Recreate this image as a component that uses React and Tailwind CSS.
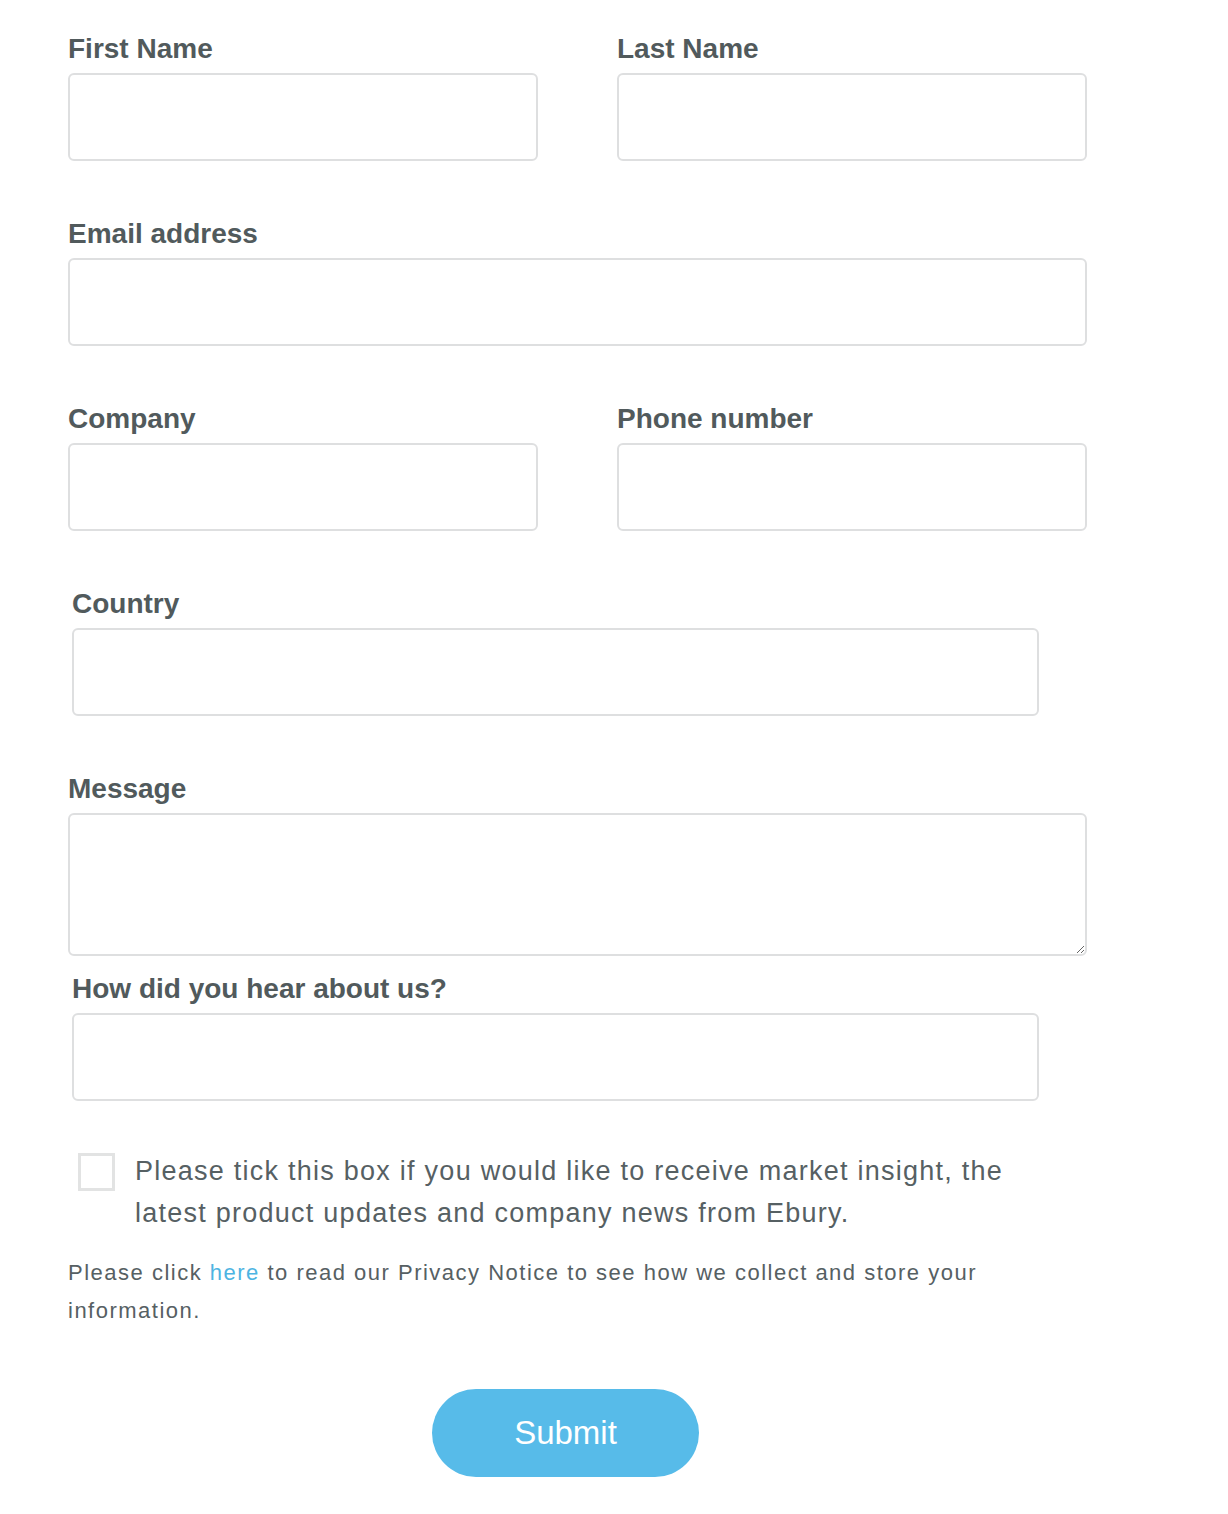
import { useState } from "react";

const labelCls = "block h-9 leading-9 text-[28px] font-semibold text-[#515a5c] mb-1.5";
const inputCls = "block w-full h-[88px] rounded-md border-2 border-[#dedfe0] bg-white px-4 text-[22px] text-[#515a5c] outline-none";

function Field({ label, type = "text", className = "" }) {
    return (
        <div className={className}>
            <label className={labelCls}>{label}</label>
            <input type={type} className={inputCls} />
        </div>
    );
}

export default function App() {
    const [optIn, setOptIn] = useState(false);

    return (
        <div className="min-h-screen bg-white font-['Liberation_Sans',Arial,sans-serif]">
            <form className="w-[1019px] ml-[68px] pt-[31px] pb-10" onSubmit={(e) => e.preventDefault()}>
                <div className="grid grid-cols-2 gap-x-[79px]">
                    <Field label="First Name" />
                    <Field label="Last Name" />
                </div>

                <Field label="Email address" type="email" className="mt-[55px]" />

                <div className="grid grid-cols-2 gap-x-[79px] mt-[55px]">
                    <Field label="Company" />
                    <Field label="Phone number" type="tel" />
                </div>

                <Field label="Country" className="mt-[55px] ml-1 w-[967px]" />

                <div className="mt-[55px]">
                    <label className={labelCls}>Message</label>
                    <textarea className="block w-full h-[143px] rounded-md border-2 border-[#dedfe0] bg-white px-4 py-3 text-[22px] text-[#515a5c] outline-none" />
                </div>

                <Field label="How did you hear about us?" className="mt-[15px] ml-1 w-[967px]" />

                <label className="flex items-start mt-[52px] ml-2.5 cursor-pointer">
                    <input
                        type="checkbox"
                        checked={optIn}
                        onChange={(e) => setOptIn(e.target.checked)}
                        className="sr-only"
                    />
                    <span className="shrink-0 w-[37px] h-[38px] border-[3px] border-[#e2e3e3] bg-white" />
                    <span className="ml-[20px] w-[905px] text-[27px] tracking-[1.25px] leading-[42px] text-[#566063] -mt-[3px]">
                        Please tick this box if you would like to receive market insight, the latest product updates and company news from Ebury.
                    </span>
                </label>

                <p className="mt-[20px] w-[1000px] text-[22px] tracking-[1.5px] leading-[38px] text-[#566063]">
                    Please click <a href="#" className="text-[#4db4e2]">here</a> to read our Privacy Notice to see how we collect and store your information.
                </p>

                <button
                    type="submit"
                    className="block mt-[59px] ml-[364px] w-[267px] h-[88px] rounded-full bg-[#57bbe9] text-white text-[33px]"
                >
                    Submit
                </button>
            </form>
        </div>
    );
}
